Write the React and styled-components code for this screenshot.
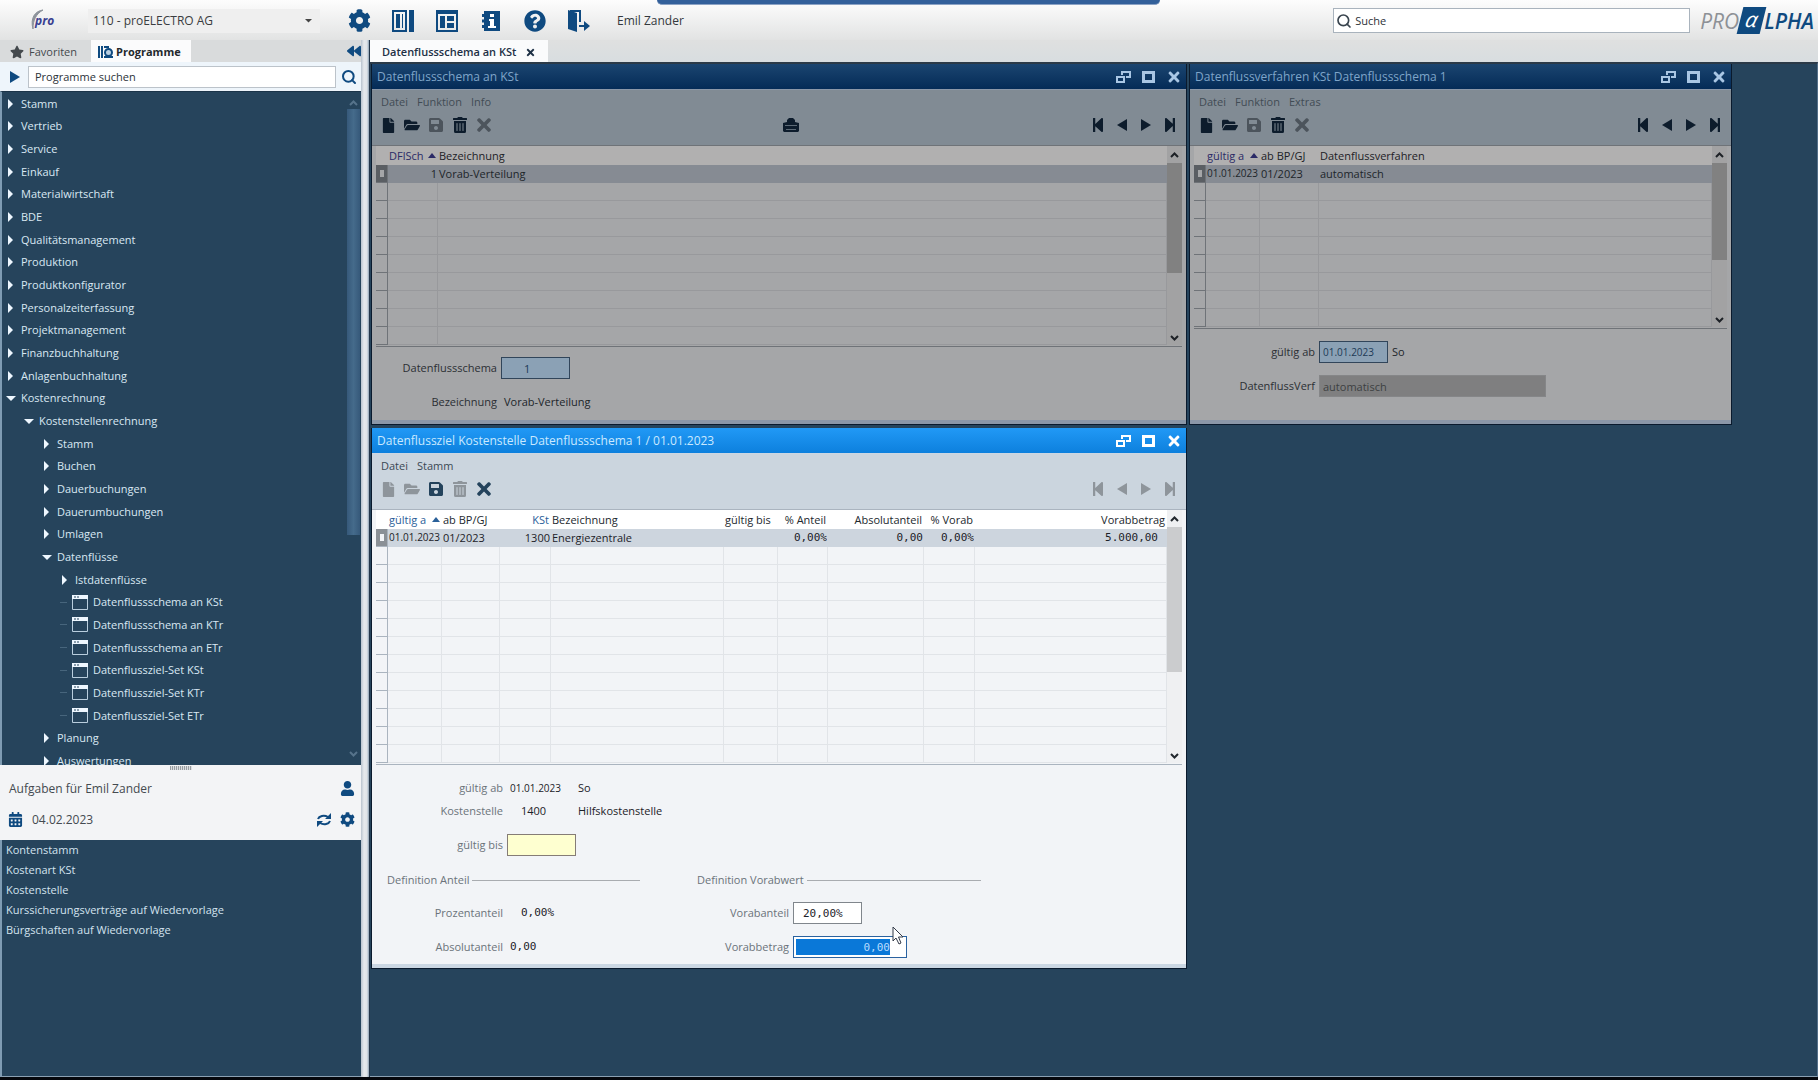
import React from "react";
import styled, { createGlobalStyle, ThemeProvider, css } from "styled-components";
import {
  FaCog, FaQuestionCircle, FaStar, FaFile, FaFolderOpen, FaSave, FaTrashAlt,
  FaTimes, FaStepBackward, FaStepForward, FaUser, FaCalendarAlt, FaBackward,
} from "react-icons/fa";
import { FiSearch } from "react-icons/fi";

const sans = `"Open Sans", "Noto Sans", sans-serif`;
const mono = `"DejaVu Sans Mono", monospace`;

const navy = "#26445c";
const blue = "#0f4a80";

const activeTheme = {
  title: "linear-gradient(#2199f6, #0d80dd)",
  titleText: "#c9e9ff",
  titleIcon: "#ffffff",
  frame: "#cbd7e3",
  bar: "#cbd5de",
  menu: "#3b4854",
  tool: "#24435c",
  toolOff: "#8e959b",
  head: "#ffffff",
  headText: "#22282e",
  sort: "#2a6099",
  rowOn: "#cdd5de",
  row: "#f2f4f7",
  line: "#e1e4e8",
  edge: "#aab4bf",
  text: "#1c2228",
  panel: "#f2f4f7",
  label: "#6b737a",
  track: "#eff0f2",
  thumb: "#cbccce",
  mark: "#8a9096",
};

const dimTheme = {
  title: "linear-gradient(#1b4570, #042b57)",
  titleText: "#7fa5c9",
  titleIcon: "#a9c6e4",
  frame: "#8b97a8",
  bar: "#818b94",
  menu: "#414b54",
  tool: "#0d1c2c",
  toolOff: "#4c545c",
  head: "#b1b0b0",
  headText: "#1d2126",
  sort: "#2b2a66",
  rowOn: "#868b93",
  row: "#a5a6a8",
  line: "#98999c",
  edge: "#6f7378",
  text: "#20252a",
  panel: "#a5a6a8",
  label: "#2b2f34",
  track: "#a2a2a3",
  thumb: "#818181",
  mark: "#5a5e63",
};

const Global = createGlobalStyle`
  *, *::before, *::after { box-sizing: border-box; }
  body { margin: 0; font: 11px/16px ${sans}; color: #1c2228; background: #000; }
  button, input, select { font: inherit; color: inherit; margin: 0; }
  button { border: 0; padding: 0; background: none; cursor: pointer; }
  ul { list-style: none; margin: 0; padding: 0; }
  a { color: inherit; text-decoration: none; }
`;

const Shell = styled.div`
  height: 100vh;
  display: flex;
  flex-direction: column;
  border-bottom: 3px solid #05070c;
  overflow: hidden;
  position: relative;
`;

const ShareBar = styled.div`
  position: absolute;
  top: 0;
  left: 657px;
  width: 503px;
  height: 5px;
  background: #33609a;
  border-bottom: 1px solid #8ba2c4;
  border-radius: 0 0 5px 5px;
`;

/* ---------- header ---------- */

const Header = styled.header`
  flex: 0 0 40px;
  display: flex;
  align-items: center;
  padding: 1px 4px 0 30px;
  background: linear-gradient(#fdfdfd, #e2e3e3);
  font-size: 12px;
`;

const ProMark = styled.div`
  width: 58px;
  height: 24px;
  display: flex;
  font-style: italic;
  font-weight: 700;
  font-size: 12px;
  line-height: 24px;
  color: #3a4090;
`;

const Arc = styled.svg`
  width: 14px;
  height: 22px;
  margin-right: -9px;
`;

const Tenant = styled.label`
  width: 232px;
  height: 24px;
  display: flex;
  align-items: center;
  padding-right: 8px;
  background: #efefef;
`;

const TenantSelect = styled.select`
  flex: 1;
  appearance: none;
  border: 0;
  background: none;
  padding: 0 5px;
  color: #3a3d40;
`;

const HeaderTools = styled.div`
  display: flex;
  margin: 0 16px 0 17px;
  color: ${blue};
`;

const HeaderButton = styled.button`
  width: 44px;
  height: 24px;
  display: grid;
  place-items: center;
`;

const UserName = styled.span`
  color: #33383d;
`;

const GlobalSearch = styled.label`
  width: 357px;
  height: 25px;
  margin-left: auto;
  display: flex;
  align-items: center;
  gap: 3px;
  padding-left: 2px;
  background: #fff;
  border: 1px solid #a9b3bd;
  color: #39444e;
`;

const PlainInput = styled.input`
  flex: 1;
  min-width: 0;
  border: 0;
  outline: 0;
  padding: 0;
  background: none;
  font-size: 11px;
  &::placeholder { color: #2c3238; opacity: 1; }
`;

const Brand = styled.div`
  display: flex;
  align-items: center;
  margin-left: 10px;
  font-style: italic;
  font-size: 21px;
  line-height: 26px;
  color: #8d9196;
`;

const BrandAlpha = styled.span`
  width: 23px;
  height: 27px;
  margin: 0 1px;
  background: ${blue};
  transform: skewX(-14deg);
  color: #fff;
  text-align: center;
  line-height: 24px;
`;

const BrandTail = styled.span`
  color: ${blue};
  font-weight: 600;
`;

/* ---------- sidebar ---------- */

const Body = styled.div`
  flex: 1;
  min-height: 0;
  display: flex;
`;

const Sidebar = styled.aside`
  flex: 0 0 361px;
  display: flex;
  flex-direction: column;
  background: #eceeef;
`;

const SideTabs = styled.div`
  flex: 0 0 22px;
  display: flex;
  background: #d9dbdc;
`;

const SideTab = styled.button`
  display: flex;
  align-items: center;
  gap: ${(p) => (p.$on ? 2 : 5)}px;
  padding: 2px ${(p) => (p.$on ? 10 : 14)}px 0 ${(p) => (p.$on ? 7 : 10)}px;
  background: ${(p) => (p.$on ? "#fbfbfc" : "none")};
  color: ${(p) => (p.$on ? "#23282d" : "#44494d")};
  font-weight: ${(p) => (p.$on ? 700 : 400)};
`;

const Collapse = styled.button`
  margin-left: auto;
  width: 14px;
  color: ${blue};
  display: grid;
  place-items: center;
`;

const TreeSearch = styled.div`
  flex: 0 0 29px;
  display: flex;
  align-items: center;
  background: #eef5fb;
  color: ${blue};
`;

const TreeSearchButton = styled.button`
  width: ${(p) => p.$w}px;
  height: 26px;
  display: grid;
  place-items: center;
`;

const TreeSearchBox = styled.label`
  flex: 1;
  height: 22px;
  display: flex;
  padding: 0 6px;
  background: #fff;
  border: 1px solid #bcc3ca;
  color: #41474d;
`;

const TreePane = styled.nav`
  flex: 1;
  min-height: 0;
  overflow: hidden;
  display: flex;
  background: ${navy};
  border-left: 2px solid #7f9cb3;
  border-top: 1px solid #1b3449;
`;

const TreeList = styled.ul`
  flex: 1;
`;

const TreeItem = styled.li`
  height: 23px;
  padding-left: ${(p) => p.$depth * 18}px;
  color: #d9e8f3;
  &:nth-child(3n + 2) { height: 22px; }
`;

const rowFace = css`
  width: 100%;
  height: 100%;
  display: flex;
  align-items: center;
  text-align: left;
`;

const TreeBranch = styled.button`
  ${rowFace}
  gap: 5px;
  padding-left: 4px;
`;

const TreeLeaf = styled.a`
  ${rowFace}
  gap: 5px;
  padding-left: 16px;
  &::before {
    content: "";
    width: 7px;
    height: 1px;
    margin-left: -12px;
    background: #47657c;
  }
`;

const TreeScroll = styled.div`
  width: 15px;
  display: flex;
  flex-direction: column;
  align-items: center;
  justify-content: space-between;
  padding: 8px 0;
  color: #56738b;
`;

const TreeThumb = styled.div`
  width: 13px;
  height: 426px;
  margin-bottom: auto;
  margin-top: 3px;
  background: linear-gradient(90deg, #36597a, #456b8b, #36597a);
`;

const TaskHead = styled.section`
  flex: 0 0 75px;
  padding: 0 6px 5px 8px;
  display: flex;
  flex-direction: column;
  background: #f3f4f6;
  color: #4a5056;
  font-size: 12px;
`;

const Grip = styled.div`
  width: 22px;
  height: 4px;
  margin: 1px 0 3px 162px;
  background: repeating-linear-gradient(90deg, #9a9ea2 0 1px, #dcdfe2 1px 2px);
`;

const TaskLine = styled.div`
  flex: 1;
  display: flex;
  align-items: center;
  gap: 8px;
  color: ${blue};
`;

const TaskText = styled.span`
  flex: 1;
  padding-left: 1px;
  color: #444a50;
`;

const TaskList = styled.ul`
  flex: 0 0 237px;
  padding-left: 4px;
  background: ${navy};
  border-left: 2px solid #7f9cb3;
  border-bottom: 1px solid #8ba1b3;
  color: #d3e3ef;
  line-height: 20px;
`;

const Splitter = styled.div`
  flex: 0 0 9px;
  background: linear-gradient(90deg, #b9c3ce, #e6e9ed 3px, #dfe3e8 6px, #8ba0b3);
  border-right: 1px solid #24364a;
`;

/* ---------- main area ---------- */

const Main = styled.main`
  flex: 1;
  min-width: 0;
  display: flex;
  flex-direction: column;
`;

const DocTabs = styled.div`
  flex: 0 0 22px;
  display: flex;
  background: linear-gradient(#dfe0e0, #d8dde0);
`;

const DocTab = styled.div`
  display: flex;
  align-items: center;
  gap: 9px;
  padding: 2px 12px 0 12px;
  background: #fafbfc;
  color: #1d3045;
  font-weight: 600;
`;

const TabClose = styled.button`
  height: 11px;
  display: grid;
`;

const Desktop = styled.div`
  flex: 1;
  position: relative;
  background: ${navy};
  border-top: 2px solid #2b3a48;
  border-right: 1px solid #54708a;
  border-bottom: 1px solid #8ba1b3;
`;

const Frame = styled.section`
  position: absolute;
  left: ${(p) => p.$x}px;
  top: ${(p) => p.$y}px;
  width: ${(p) => p.$w}px;
  height: ${(p) => p.$h}px;
  display: flex;
  flex-direction: column;
  background: ${(p) => p.theme.panel};
  border: solid #0a1a2d;
  border-width: 0 1px 1px;
  box-shadow: inset 0 -4px 0 ${(p) => p.theme.frame};
  color: ${(p) => p.theme.text};
`;

const TitleBar = styled.header`
  flex: 0 0 25px;
  display: flex;
  align-items: center;
  justify-content: space-between;
  padding-left: 5px;
  background: ${(p) => p.theme.title};
  color: ${(p) => p.theme.titleText};
`;

const Title = styled.h2`
  margin: 0;
  font-size: 12px;
  font-weight: 400;
`;

const TitleButtons = styled.div`
  display: flex;
  color: ${(p) => p.theme.titleIcon};
`;

const TitleButton = styled.button`
  width: 25px;
  height: 24px;
  display: grid;
  place-items: center;
`;

const CommandArea = styled.div`
  flex: 0 0 57px;
  padding: 3px 4px 0;
  background: ${(p) => p.theme.bar};
  border-top: 1px solid ${(p) => p.theme.frame};
  border-bottom: 1px solid ${(p) => p.theme.edge};
`;

const MenuBar = styled.div`
  height: 18px;
  display: flex;
  gap: 9px;
  padding-left: 5px;
  color: ${(p) => p.theme.menu};
`;

const ToolBar = styled.div`
  height: 28px;
  display: flex;
  align-items: center;
  justify-content: space-between;
`;

const ToolGroup = styled.div`
  display: flex;
`;

const ToolButton = styled.button`
  width: 24px;
  height: 24px;
  display: grid;
  place-items: center;
  color: ${(p) => (p.$off ? p.theme.toolOff : p.theme.tool)};
`;

const GridBox = styled.div`
  display: flex;
  margin: 0 4px;
  padding-bottom: 1px;
  border-bottom: 1px solid ${(p) => p.theme.edge};
`;

const Table = styled.table`
  flex: 1;
  width: 0;
  table-layout: fixed;
  border-collapse: separate;
  border-spacing: 0;
`;

const cell = css`
  height: 18px;
  padding: 0 2px 0 1px;
  overflow: hidden;
  white-space: nowrap;
  line-height: 17px;
  text-align: ${(p) => (p.$right ? "right" : "left")};
`;

const Th = styled.th`
  ${cell}
  height: 19px;
  font-weight: 400;
  background: ${(p) => p.theme.head};
  color: ${(p) => (p.$sort ? p.theme.sort : p.theme.headText)};
`;

const HeadText = styled.span`
  display: flex;
  align-items: center;
  justify-content: ${(p) => (p.$right ? "flex-end" : "flex-start")};
`;

const Up = styled.i`
  flex: none;
  margin-left: auto;
  border: solid transparent;
  border-width: 0 4px 5px;
  border-bottom-color: ${(p) => p.theme.sort};
`;

const Td = styled.td`
  ${cell}
  background: ${(p) => (p.$on ? p.theme.rowOn : p.theme.row)};
  border-bottom: 1px solid ${(p) => (p.$on ? p.theme.rowOn : p.theme.line)};
  border-right: 1px solid ${(p) => (p.$on ? p.theme.rowOn : p.theme.line)};
  font-family: ${(p) => (p.$mono ? mono : sans)};
  font-size: ${(p) => (p.$small ? 10 : 11)}px;
  padding-right: ${(p) => (p.$pad ? p.$pad : 0)}px;
`;

const Selector = styled.td`
  ${cell}
  padding: 0;
  background: ${(p) => (p.$on ? p.theme.mark : p.theme.row)};
  border-right: 1px solid ${(p) => p.theme.edge};
  border-bottom: 1px solid ${(p) => p.theme.edge};
  &::after {
    content: "";
    display: ${(p) => (p.$on ? "block" : "none")};
    width: 4px;
    height: 7px;
    margin-left: 4px;
    background: ${(p) => p.theme.row};
  }
`;

const Scroll = styled.div`
  width: 15px;
  display: flex;
  flex-direction: column;
  align-items: center;
  padding: 6px 0 4px;
  gap: 5px;
  background: ${(p) => p.theme.track};
  color: ${(p) => p.theme.headText};
`;

const Thumb = styled.div`
  width: 100%;
  height: ${(p) => p.$h}px;
  margin-bottom: auto;
  background: ${(p) => p.theme.thumb};
`;

/* ---------- forms ---------- */

const Form = styled.form`
  display: flex;
  flex-direction: column;
  gap: 12px;
  margin: 0 4px;
  padding-top: ${(p) => (p.$roomy ? 12 : 10)}px;
`;

const Pair = styled.div`
  display: flex;
  flex-direction: column;
  gap: 1px;
`;

const Field = styled.div`
  height: 22px;
  display: flex;
  align-items: center;
  gap: 4px;
`;

const Label = styled.label`
  flex: 0 0 ${(p) => p.$w}px;
  text-align: right;
  color: ${(p) => p.theme.label};
`;

const Value = styled.output`
  min-width: ${(p) => (p.$w ? p.$w : 0)}px;
  padding-left: ${(p) => (p.$indent ? 14 : 3)}px;
  font-family: ${(p) => (p.$mono ? mono : sans)};
`;

const DateValue = styled(Value)`
  font-size: 10px;
`;

const tones = {
  dim: ["#8ba1b5", "#31455a", "#1d3a55"],
  locked: ["#7f7f80", "#858688", "#3d3f42"],
  yellow: ["#feffd0", "#857c76", "#1c2228"],
  white: ["#ffffff", "#80868c", "#1c2228"],
  focus: ["#ffffff", "#2a62a0", "#1c2228"],
};

const Box = styled.input`
  width: ${(p) => p.$w}px;
  height: 22px;
  padding: 0 3px;
  outline: 0;
  background: ${(p) => tones[p.$tone][0]};
  border: 1px solid ${(p) => tones[p.$tone][1]};
  color: ${(p) => tones[p.$tone][2]};
  font-family: ${(p) => (p.$mono ? mono : sans)};
  text-indent: ${(p) => (p.$indent ? p.$indent : 0)}px;
`;

const DateBox = styled(Box)`
  font-size: 10px;
`;

const SelectedBox = styled(Box)`
  padding: 2px 16px 2px 2px;
  text-align: right;
  color: #b8dcff;
  background: linear-gradient(#0a78d8, #0a78d8) content-box, #fff;
`;

const Groups = styled.div`
  display: flex;
  gap: 57px;
  padding-left: 11px;
`;

const Group = styled.fieldset`
  width: ${(p) => p.$w}px;
  margin: 0;
  padding: 0;
  border: 0;
  display: flex;
  flex-direction: column;
  gap: 12px;
`;

const Legend = styled.legend`
  width: 100%;
  height: 34px;
  padding: 0 0 10px;
  display: flex;
  align-items: center;
  gap: 3px;
  color: #6b737a;
  &::after {
    content: "";
    flex: 1;
    height: 1px;
    background: #a9acb0;
  }
`;

const Cursor = styled.svg`
  position: absolute;
  left: 522px;
  top: 862px;
`;

/* ---------- drawings ---------- */

const Tri = ({ dir = "right", size = 8, color = "currentColor" }) => {
  const d = {
    right: "M2 0 L7 5 L2 10Z",
    left: "M8 0 L2 5 L8 10Z",
    down: "M0 3 L10 3 L5 8Z",
  }[dir];
  return (
    <svg width={size} height={size} viewBox="0 0 10 10" aria-hidden="true">
      <path d={d} fill={color} />
    </svg>
  );
};

const Play = () => (
  <svg width="14" height="14" viewBox="0 0 14 14" aria-hidden="true">
    <path d="M3 1L13 7L3 13Z" fill="currentColor" />
  </svg>
);

const Chevron = ({ up }) => (
  <svg width="9" height="6" viewBox="0 0 9 6" aria-hidden="true">
    <path d={up ? "M1 5 L4.5 1.5 L8 5" : "M1 1 L4.5 4.5 L8 1"} fill="none" stroke="currentColor" strokeWidth="2" />
  </svg>
);

const NavTri = ({ dir }) => (
  <svg width="14" height="14" viewBox="0 0 14 14" aria-hidden="true">
    <path d={dir === "left" ? "M12 1 V13 L2 7Z" : "M2 1 V13 L12 7Z"} fill="currentColor" />
  </svg>
);

const Columns = () => (
  <svg width="22" height="22" viewBox="0 0 22 22" aria-hidden="true">
    <path d="M0 0H15V22H0Z M2 2V20H13V2Z" fill="currentColor" fillRule="evenodd" />
    <path d="M4 4H8V18H4Z M17 0H22V22H17Z" fill="currentColor" />
    <path d="M10.500 4V18" stroke="currentColor" />
  </svg>
);

const Panels = () => (
  <svg width="22" height="22" viewBox="0 0 22 22" aria-hidden="true">
    <path d="M0 0H22V22H0Z M2 4V20H20V4Z" fill="currentColor" fillRule="evenodd" />
    <path d="M4 6H9V18H4Z M11 6H18V11H11Z M11 13H18V18H11Z" fill="currentColor" />
  </svg>
);

const InfoBook = () => (
  <svg width="20" height="22" viewBox="0 0 20 22" aria-hidden="true">
    <path d="M3 1H19V21H3V18H1V15H3V12.500H1V9.500H3V7H1V4H3Z" fill="currentColor" />
    <path d="M9 4H13V7H9Z M8 9H13V16H15V18H7V16H9V11H8Z" fill="#fff" />
  </svg>
);

const Exit = () => (
  <svg width="22" height="22" viewBox="0 0 22 22" aria-hidden="true">
    <path d="M0 0L9 3V22L0 19Z" fill="currentColor" />
    <path d="M2 1H12V12M11 16H17" fill="none" stroke="currentColor" strokeWidth="2" />
    <path d="M16 11L22 16L16 21Z" fill="currentColor" />
  </svg>
);

const Program = () => (
  <svg width="16" height="14" viewBox="0 0 16 14" aria-hidden="true">
    <path d="M0 1H2V13H0Z M3 1H5V13H3Z" fill={blue} />
    <path d="M6 2H11M6 12H15" stroke={blue} strokeWidth="2" />
    <circle cx="10.500" cy="7.500" r="3.500" fill="#b9cfe2" stroke={blue} strokeWidth="2" />
  </svg>
);

const Leaf = () => (
  <svg width="16" height="15" viewBox="0 0 16 15" aria-hidden="true">
    <path d="M0.500 0.500H15.500V14.500H0.500Z" fill="none" stroke="#b9cede" />
    <path d="M0 0H16V4H0Z" fill="#eef7ff" />
    <path d="M2 2H4M5 2H7" stroke={navy} />
  </svg>
);

const Printer = () => (
  <svg width="16" height="16" viewBox="0 0 16 16" aria-hidden="true">
    <path d="M4 5V3L6 1H10L12 3V5L16 6V14L15 15H1L0 14V6Z" fill="currentColor" />
    <path d="M2 8.500H14M3 12.500H13" stroke="#5d6a76" />
  </svg>
);

const Refresh = () => (
  <svg width="16" height="14" viewBox="0 0 16 14" aria-hidden="true">
    <path d="M2 6C3 3 8 1.500 12 4M14 8C13 11 8 12.500 4 10" fill="none" stroke="currentColor" strokeWidth="2" />
    <path d="M15 0V6H9Z M1 14V8H7Z" fill="currentColor" />
  </svg>
);

const Restore = () => (
  <svg width="15" height="12" viewBox="0 0 15 12" aria-hidden="true">
    <path d="M1 6H8V11H1Z M6 4V1H14V6H10" fill="none" stroke="currentColor" strokeWidth="2" />
  </svg>
);

const Maximize = () => (
  <svg width="13" height="12" viewBox="0 0 13 12" aria-hidden="true">
    <path d="M1.500 1.500H11.500V10.500H1.500Z" fill="none" stroke="currentColor" strokeWidth="3" />
  </svg>
);

/* ---------- composed parts ---------- */

const tree = [
  [0, "Stamm"], [0, "Vertrieb"], [0, "Service"], [0, "Einkauf"], [0, "Materialwirtschaft"],
  [0, "BDE"], [0, "Qualitätsmanagement"], [0, "Produktion"], [0, "Produktkonfigurator"],
  [0, "Personalzeiterfassung"], [0, "Projektmanagement"], [0, "Finanzbuchhaltung"],
  [0, "Anlagenbuchhaltung"], [0, "Kostenrechnung", "open"], [1, "Kostenstellenrechnung", "open"],
  [2, "Stamm"], [2, "Buchen"], [2, "Dauerbuchungen"], [2, "Dauerumbuchungen"], [2, "Umlagen"],
  [2, "Datenflüsse", "open"], [3, "Istdatenflüsse"],
  [3, "Datenflussschema an KSt", "leaf"], [3, "Datenflussschema an KTr", "leaf"],
  [3, "Datenflussschema an ETr", "leaf"], [3, "Datenflussziel-Set KSt", "leaf"],
  [3, "Datenflussziel-Set KTr", "leaf"], [3, "Datenflussziel-Set ETr", "leaf"],
  [2, "Planung"], [2, "Auswertungen"],
];

const tasks = [
  "Kontenstamm", "Kostenart KSt", "Kostenstelle",
  "Kurssicherungsverträge auf Wiedervorlage", "Bürgschaften auf Wiedervorlage",
];

function WindowBox({ theme, x, y, w, h, title, menu, off = [], navOff, print, children }) {
  const tools = [["Neu", FaFile], ["Öffnen", FaFolderOpen], ["Speichern", FaSave], ["Löschen", FaTrashAlt], ["Abbrechen", FaTimes]];
  return (
    <ThemeProvider theme={theme}>
      <Frame $x={x} $y={y} $w={w} $h={h}>
        <TitleBar>
          <Title>{title}</Title>
          <TitleButtons>
            <TitleButton aria-label="Wiederherstellen"><Restore /></TitleButton>
            <TitleButton aria-label="Maximieren"><Maximize /></TitleButton>
            <TitleButton aria-label="Schließen"><FaTimes size={16} /></TitleButton>
          </TitleButtons>
        </TitleBar>
        <CommandArea>
          <MenuBar>{menu.map((m) => <button key={m}>{m}</button>)}</MenuBar>
          <ToolBar>
            <ToolGroup>
              {tools.map(([name, Icon], i) => (
                <ToolButton key={name} aria-label={name} $off={off.includes(i)}>
                  <Icon size={i === 4 ? 20 : i === 0 ? 15 : 16} />
                </ToolButton>
              ))}
            </ToolGroup>
            {print && <ToolButton aria-label="Drucken"><Printer /></ToolButton>}
            <ToolGroup>
              <ToolButton aria-label="Erster" $off={navOff}><FaStepBackward size={16} /></ToolButton>
              <ToolButton aria-label="Zurück" $off={navOff}><NavTri dir="left" /></ToolButton>
              <ToolButton aria-label="Weiter" $off={navOff}><NavTri dir="right" /></ToolButton>
              <ToolButton aria-label="Letzter" $off={navOff}><FaStepForward size={16} /></ToolButton>
            </ToolGroup>
          </ToolBar>
        </CommandArea>
        {children}
      </Frame>
    </ThemeProvider>
  );
}

function DataGrid({ columns, values, rows, thumb }) {
  return (
    <GridBox>
      <Table>
        <colgroup>
          <col style={{ width: 12 }} />
          {columns.map((c) => <col key={c.name} style={c.w ? { width: c.w } : undefined} />)}
        </colgroup>
        <thead>
          <tr>
            <Th />
            {columns.map((c) => (
              <Th key={c.name} $right={c.right} $sort={c.sort || c.tint}>
                <HeadText $right={c.right}>{c.name}{c.sort && <Up />}</HeadText>
              </Th>
            ))}
          </tr>
        </thead>
        <tbody>
          {Array.from({ length: rows }, (_, r) => (
            <tr key={r}>
              <Selector $on={r === 0} />
              {columns.map((c, i) => (
                <Td key={c.name} $on={r === 0} $right={c.rightValue || c.right} $mono={c.mono} $pad={c.pad} $small={c.small}>
                  {r === 0 ? values[i] : null}
                </Td>
              ))}
            </tr>
          ))}
        </tbody>
      </Table>
      <Scroll>
        <Chevron up />
        <Thumb $h={thumb} />
        <Chevron />
      </Scroll>
    </GridBox>
  );
}

function TreeRow({ depth, name, kind }) {
  return (
    <TreeItem $depth={depth}>
      {kind === "leaf" ? (
        <TreeLeaf href="#"><Leaf />{name}</TreeLeaf>
      ) : (
        <TreeBranch><Tri dir={kind === "open" ? "down" : "right"} size={10} color="#eef7ff" />{name}</TreeBranch>
      )}
    </TreeItem>
  );
}

export default function App() {
  return (
    <Shell>
      <Global />
      <Header>
        <ProMark>
          <Arc viewBox="0 0 14 22" aria-hidden="true">
            <path d="M13 1C5 2 0 9 3 20C3 11 6 5 13 1Z" fill="#8d939b" stroke="#8d939b" />
          </Arc>
          pro
        </ProMark>
        <Tenant>
          <TenantSelect aria-label="Mandant" defaultValue="110">
            <option value="110">110 - proELECTRO AG</option>
          </TenantSelect>
          <Tri dir="down" size={7} color="#444" />
        </Tenant>
        <HeaderTools>
          <HeaderButton aria-label="Einstellungen"><FaCog size={23} /></HeaderButton>
          <HeaderButton aria-label="Spalten"><Columns /></HeaderButton>
          <HeaderButton aria-label="Layout"><Panels /></HeaderButton>
          <HeaderButton aria-label="Info"><InfoBook /></HeaderButton>
          <HeaderButton aria-label="Hilfe"><FaQuestionCircle size={22} /></HeaderButton>
          <HeaderButton aria-label="Abmelden"><Exit /></HeaderButton>
        </HeaderTools>
        <UserName>Emil Zander</UserName>
        <GlobalSearch>
          <FiSearch size={16} strokeWidth={2.5} />
          <PlainInput aria-label="Suche" placeholder="Suche" />
        </GlobalSearch>
        <Brand>PRO<BrandAlpha>α</BrandAlpha><BrandTail>LPHA</BrandTail></Brand>
      </Header>
      <ShareBar />
      <Body>
        <Sidebar>
          <SideTabs>
            <SideTab><FaStar size={14} />Favoriten</SideTab>
            <SideTab $on><Program />Programme</SideTab>
            <Collapse aria-label="Einklappen"><FaBackward size={14} /></Collapse>
          </SideTabs>
          <TreeSearch>
            <TreeSearchButton $w={28} aria-label="Start"><Play /></TreeSearchButton>
            <TreeSearchBox><PlainInput aria-label="Programme suchen" placeholder="Programme suchen" /></TreeSearchBox>
            <TreeSearchButton $w={25} aria-label="Suchen"><FiSearch size={16} strokeWidth={3} /></TreeSearchButton>
          </TreeSearch>
          <TreePane>
            <TreeList>
              {tree.map(([depth, name, kind], i) => <TreeRow key={i} depth={depth} name={name} kind={kind} />)}
            </TreeList>
            <TreeScroll>
              <Chevron up />
              <TreeThumb />
              <Chevron />
            </TreeScroll>
          </TreePane>
          <TaskHead>
            <Grip />
            <TaskLine><TaskText>Aufgaben für Emil Zander</TaskText><FaUser size={15} /></TaskLine>
            <TaskLine>
              <FaCalendarAlt size={15} />
              <TaskText>04.02.2023</TaskText>
              <Refresh />
              <FaCog size={15} />
            </TaskLine>
          </TaskHead>
          <TaskList>{tasks.map((t) => <li key={t}><a href="#">{t}</a></li>)}</TaskList>
        </Sidebar>
        <Splitter />
        <Main>
          <DocTabs>
            <DocTab>Datenflussschema an KSt<TabClose aria-label="Tab schließen"><FaTimes size={11} /></TabClose></DocTab>
          </DocTabs>
          <Desktop>
            <WindowBox theme={dimTheme} x={1} y={0} w={816} h={361} title="Datenflussschema an KSt" menu={["Datei", "Funktion", "Info"]} off={[2, 4]} print>
              <DataGrid
                rows={10}
                thumb={110}
                columns={[{ name: "DFlSch", w: 50, sort: true, rightValue: true }, { name: "Bezeichnung" }]}
                values={["1", "Vorab-Verteilung"]}
              />
              <Form>
                <Field><Label $w={121} htmlFor="schema">Datenflussschema</Label><Box id="schema" $w={69} $tone="dim" $indent={19} defaultValue="1" /></Field>
                <Field><Label $w={121} htmlFor="bez">Bezeichnung</Label><Value id="bez">Vorab-Verteilung</Value></Field>
              </Form>
            </WindowBox>

            <WindowBox theme={dimTheme} x={819} y={0} w={543} h={361} title="Datenflussverfahren KSt Datenflussschema 1" menu={["Datei", "Funktion", "Extras"]} off={[2, 4]}>
              <DataGrid
                rows={9}
                thumb={97}
                columns={[{ name: "gültig a", w: 54, sort: true, small: true }, { name: "ab BP/GJ", w: 59 }, { name: "Datenflussverfahren" }]}
                values={["01.01.2023", "01/2023", "automatisch"]}
              />
              <Form $roomy>
                <Field><Label $w={121} htmlFor="ab2">gültig ab</Label><DateBox id="ab2" $w={69} $tone="dim" defaultValue="01.01.2023" /><span>So</span></Field>
                <Field><Label $w={121} htmlFor="verf">DatenflussVerf</Label><Box id="verf" $w={227} $tone="locked" defaultValue="automatisch" readOnly /></Field>
              </Form>
            </WindowBox>

            <WindowBox theme={activeTheme} x={1} y={364} w={816} h={541} title="Datenflussziel Kostenstelle Datenflussschema 1 / 01.01.2023" menu={["Datei", "Stamm"]} off={[0, 1, 3]} navOff>
              <DataGrid
                rows={13}
                thumb={145}
                columns={[
                  { name: "gültig a", w: 54, sort: true, small: true }, { name: "ab BP/GJ", w: 58 },
                  { name: "KSt", w: 51, right: true, tint: true }, { name: "Bezeichnung", w: 173 },
                  { name: "gültig bis", w: 54 }, { name: "% Anteil", w: 50, right: true, mono: true },
                  { name: "Absolutanteil", w: 96, right: true, mono: true },
                  { name: "% Vorab", w: 51, right: true, mono: true },
                  { name: "Vorabbetrag", right: true, mono: true, pad: 8 },
                ]}
                values={["01.01.2023", "01/2023", "1300", "Energiezentrale", "", "0,00%", "0,00", "0,00%", "5.000,00"]}
              />
              <Form $roomy>
                <Pair>
                  <Field><Label $w={127} htmlFor="ab3">gültig ab</Label><DateValue id="ab3" $w={64}>01.01.2023</DateValue><Value>So</Value></Field>
                  <Field><Label $w={127} htmlFor="kst">Kostenstelle</Label><Value id="kst" $w={64} $indent>1400</Value><Value>Hilfskostenstelle</Value></Field>
                </Pair>
                <Field><Label $w={127} htmlFor="bis">gültig bis</Label><Box id="bis" $w={69} $tone="yellow" /></Field>
                <Groups>
                  <Group $w={253}>
                    <Legend>Definition Anteil</Legend>
                    <Field><Label $w={116} htmlFor="proz">Prozentanteil</Label><Value id="proz" $mono $indent>0,00%</Value></Field>
                    <Field><Label $w={116} htmlFor="abs">Absolutanteil</Label><Value id="abs" $mono>0,00</Value></Field>
                  </Group>
                  <Group $w={284}>
                    <Legend>Definition Vorabwert</Legend>
                    <Field><Label $w={92} htmlFor="vant">Vorabanteil</Label><Box id="vant" $w={69} $tone="white" $mono $indent={6} defaultValue="20,00%" /></Field>
                    <Field><Label $w={92} htmlFor="vbet">Vorabbetrag</Label><SelectedBox id="vbet" $w={114} $tone="focus" $mono defaultValue="0,00" /></Field>
                  </Group>
                </Groups>
              </Form>
            </WindowBox>
            <Cursor width="13" height="19" viewBox="0 0 13 19" aria-hidden="true">
              <path d="M1 1V15L4 12L7 18L9 17L6.500 11H11Z" fill="#fff" stroke="#333a48" />
            </Cursor>
          </Desktop>
        </Main>
      </Body>
    </Shell>
  );
}
